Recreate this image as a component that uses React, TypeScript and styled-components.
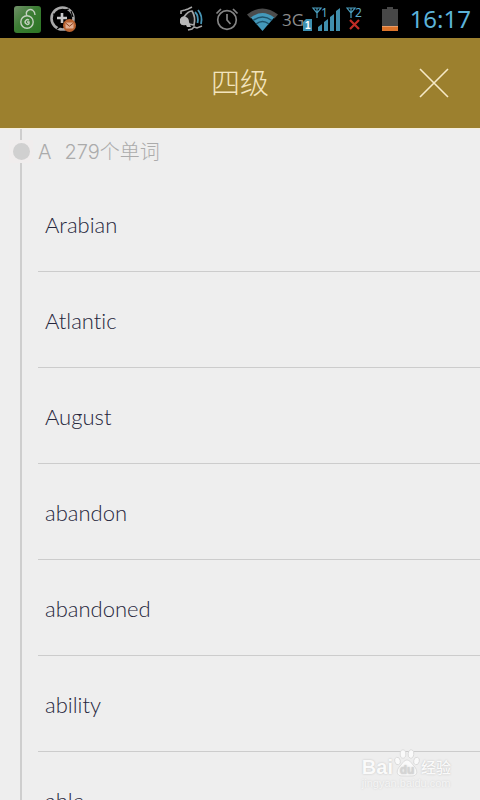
import React from 'react';
import styled, { createGlobalStyle } from 'styled-components';

const GlobalStyle = createGlobalStyle`
  * { box-sizing: border-box; }
  body { margin: 0; background: #eeeeee; }
`;

const Screen = styled.div`
  position: relative;
  display: flex;
  flex-direction: column;
  height: 100vh;
  overflow: hidden;
  background: #eeeeee;
  font-family: 'Open Sans', 'Noto Sans CJK SC', sans-serif;
`;

const StatusBar = styled.div`
  display: flex;
  flex: none;
  align-items: center;
  justify-content: space-between;
  height: 38px;
  padding: 0 9px 0 14px;
  background: #000;
`;

const StatusGroup = styled.div<{ $gap: number }>`
  display: flex;
  align-items: center;
  gap: ${({ $gap }) => $gap}px;

  svg { display: block; flex: none; }
`;

const Clock = styled.time`
  color: #5cb3d9;
  font: 400 24px/38px 'Noto Sans', sans-serif;
`;

const Header = styled.header`
  display: grid;
  flex: none;
  grid-template-columns: 1fr auto 1fr;
  align-items: center;
  height: 91px;
  padding: 0 24px;
  background: #9c802e;
  border-bottom: 1px solid #f6efdc;
`;

const Title = styled.h1`
  grid-column: 2;
  margin: 0;
  padding-bottom: 4px;
  color: #f3e4bd;
  font: 300 29px/40px 'Noto Sans CJK SC', sans-serif;
`;

const CloseButton = styled.button`
  display: grid;
  justify-self: end;
  place-items: center;
  width: 44px;
  height: 44px;
  padding: 0;
  border: 0;
  background: none;
  color: #f6e9c6;
`;

const Content = styled.main`
  display: flex;
  flex: 1;
  min-height: 0;
  overflow-y: auto;
  scrollbar-width: none;
`;

const Timeline = styled.div`
  display: flex;
  flex: none;
  flex-direction: column;
  align-items: center;
  width: 38px;
  height: max-content;
  min-height: 100%;
  padding-left: 4px;
`;

const Rail = styled.div<{ $grow?: boolean }>`
  flex: ${({ $grow }) => ($grow ? '1' : 'none')};
  width: 2px;
  min-height: 11px;
  background: #cecece;
`;

const Marker = styled.div`
  display: grid;
  flex: none;
  place-items: center;
  width: 24px;
  height: 23px;
  background: #f0eded;

  &::before {
    width: 17px;
    height: 17px;
    border-radius: 50%;
    background: #d0d0d0;
    content: '';
  }
`;

const Section = styled.section`
  flex: 1;
  min-width: 0;
`;

const SectionTitle = styled.h2`
  display: flex;
  gap: 13px;
  align-items: center;
  height: 47px;
  margin: 0;
  color: #ababab;
  font: 300 20px/47px Inter, 'Noto Sans CJK SC', sans-serif;
`;

const WordList = styled.ul`
  margin: 0;
  padding: 0;
  list-style: none;
`;

const WordRow = styled.li`
  display: flex;
  align-items: center;
  height: 96px;
  padding: 2px 7px 0;
  border-bottom: 1px solid #cccccc;
  color: #26263c;
  font: 300 22px/32px Lato, sans-serif;
  font-variant-ligatures: none;
`;

const Watermark = styled.div`
  position: absolute;
  right: 29px;
  bottom: 12px;
  display: flex;
  flex-direction: column;
  color: #fafafa;
  text-shadow: 0 0 2px #bdbdbd;
  pointer-events: none;
`;

const Brand = styled.div`
  display: flex;
  align-items: flex-end;
  font: 700 20px/22px 'Liberation Sans', sans-serif;

  svg { display: block; flex: none; }
`;

const BrandSuffix = styled.span`
  font: 500 15px/22px 'Noto Sans CJK SC', sans-serif;
`;

const Site = styled.span`
  color: #f5f5f5;
  font: 400 11px/10px 'Liberation Sans', sans-serif;
  text-shadow: 0 0 2px #cccccc;
`;

const words = ['Arabian', 'Atlantic', 'August', 'abandon', 'abandoned', 'ability', 'able'];

const LockIcon = () => (
  <svg width="27" height="27" viewBox="0 0 27 27" fill="none">
    <defs>
      <linearGradient id="lock" x1="0" y1="0" x2="1" y2="1">
        <stop offset="0" stopColor="#72906a" />
        <stop offset=".45" stopColor="#3b7d33" />
        <stop offset="1" stopColor="#2c7524" />
      </linearGradient>
    </defs>
    <rect width="27" height="27" rx="3" fill="url(#lock)" />
    <g stroke="#c4d0c0" strokeWidth="1.4">
      <circle cx="13" cy="16" r="6.2" />
      <path d="M13 10C10.500 5 16 2 19 4.500Q21 6 21 9" />
      <path d="M15 14.300a2.300 2.300 0 1 0 0 3.400V16h-2" />
    </g>
  </svg>
);

const MessageIcon = () => (
  <svg width="27" height="27" viewBox="0 0 27 27" fill="none">
    <circle cx="12.5" cy="12.5" r="11" stroke="#a8a8a8" strokeWidth="2.6" />
    <path d="M3 8l5 1 3-4 8-2M7 23l4-3 5 1M21 5l2 6" stroke="#000" strokeWidth="1.2" />
    <path d="M12 7v10M7 12h10" stroke="#c8c8c8" strokeWidth="2.6" />
    <circle cx="19.5" cy="19.5" r="6.5" fill="#ba6330" />
    <rect x="15.5" y="16.5" width="8" height="6" rx=".8" fill="#e0ae92" />
    <path d="M15.500 17l4 3.200 4-3.200" stroke="#8e431e" />
  </svg>
);

const VibrateIcon = () => (
  <svg width="28" height="26" viewBox="0 0 28 26" fill="none">
    <path d="M2 8V5l4-1 3-1 4-2" stroke="#a5a5a5" strokeWidth="1.6" />
    <path d="M9 24l4-1 2-2 3 1 5-2" stroke="#a5a5a5" strokeWidth="1.6" />
    <path d="M5 11q4-6 8-6q4 6 2 14l-5-1" fill="#151515" stroke="#a5a5a5" strokeWidth="1.7" />
    <path d="M1 13q2-4 6-2q3 1 3 5l2 5H8l-1-2q-5 1-6-2z" fill="#b8b8b8" />
    <path d="M16 6q4 4 2.500 11M19 4q5 6 3 14" stroke="#4795b5" strokeWidth="1.8" />
  </svg>
);

const AlarmIcon = () => (
  <svg width="24" height="24" viewBox="0 0 24 24" fill="none" stroke="#858585" strokeWidth="1.7">
    <circle cx="12" cy="13" r="9.3" />
    <path d="M12 7v6l3.500 4M1.500 6.500L6 2M18 2l4.500 4.500" />
  </svg>
);

const WifiIcon = () => (
  <svg width="31" height="23" viewBox="0 0 31 23" fill="none">
    <path d="M0 6.500Q15.500-5.500 31 6.500L27.500 10.500Q15.500 1.500 3.500 10.500z" fill="#4b4b4b" />
    <path d="M3.800 9.500Q15.500.5 27.200 9.500L15.500 23z" fill="#4499bb" />
    <path d="M6 12.500Q15.500 5.500 25 12.500M9 16Q15.500 11 22 16" stroke="#1e526a" strokeWidth="1.5" />
  </svg>
);

const NetworkIcon = () => (
  <svg width="60" height="28" viewBox="0 0 60 28" fill="none">
    <text x="0" y="21" fill="#8c8c8c" fontFamily="Open Sans, sans-serif" fontSize="17" fontWeight="500">3G</text>
    <path d="M24 14h6v12h-9v-9z" fill="#3d91b2" />
    <text x="23" y="24" fill="#fff" fontFamily="Liberation Sans, sans-serif" fontSize="10" fontWeight="700">1</text>
    <path d="M31 3h8l-4 5zM35 3v10" stroke="#4b9ebe" strokeWidth="1.2" />
    <text x="39" y="12" fill="#5cabc9" fontFamily="Noto Sans, sans-serif" fontSize="12">1</text>
    <path d="M36 26v-4l4-3v7zM42 26v-9l4-3v12zM48 26V12l4-3v17zM54 26V6l4-3v23z" fill="#408fad" />
  </svg>
);

const SecondSimIcon = () => (
  <svg width="18" height="28" viewBox="0 0 18 28" fill="none">
    <path d="M1 3h8L5 8zM5 3v10" stroke="#4b9ebe" strokeWidth="1.2" />
    <text x="9" y="12" fill="#5cabc9" fontFamily="Noto Sans, sans-serif" fontSize="12">2</text>
    <path d="M4 15l9 9M13 15l-9 9" stroke="#c02c26" strokeWidth="2.2" />
  </svg>
);

const BatteryIcon = () => (
  <svg width="16" height="24" viewBox="0 0 16 24">
    <path d="M0 2h5V0h6v2h5v22H0z" fill="#474747" />
    <path d="M0 19.500h16V24H0z" fill="#dc742b" />
    <path d="M0 19.500h16" stroke="#eb9c66" />
  </svg>
);

const PawIcon = () => (
  <svg width="28" height="29" viewBox="0 0 26 29">
    <g fill="#fafafa" stroke="#d2d2d2" strokeWidth=".7">
      <ellipse cx="3.5" cy="12" rx="2.8" ry="3.8" transform="rotate(-15 3.500 12)" />
      <ellipse cx="9" cy="5" rx="2.8" ry="4.2" />
      <ellipse cx="17" cy="5" rx="2.8" ry="4.2" transform="rotate(10 17 5)" />
      <ellipse cx="22.5" cy="12" rx="2.8" ry="3.8" transform="rotate(15 22.500 12)" />
      <path d="M13 11c3 0 4.500 3.500 7 6 4 4 4 10-2 10H8c-6 0-6-6-2-10 2.500-2.500 4-6 7-6z" />
    </g>
    <text x="13" y="25" fill="#d4d4d4" textAnchor="middle" fontFamily="Liberation Sans, sans-serif" fontSize="12" fontWeight="700">du</text>
  </svg>
);

export default function App() {
  return (
    <Screen>
      <GlobalStyle />
      <StatusBar>
        <StatusGroup $gap={9}>
          <LockIcon />
          <MessageIcon />
        </StatusGroup>
        <StatusGroup $gap={18}>
          <StatusGroup $gap={4}>
            <StatusGroup $gap={8}>
              <VibrateIcon />
              <AlarmIcon />
              <WifiIcon />
            </StatusGroup>
            <NetworkIcon />
            <SecondSimIcon />
          </StatusGroup>
          <StatusGroup $gap={12}>
            <BatteryIcon />
            <Clock>16:17</Clock>
          </StatusGroup>
        </StatusGroup>
      </StatusBar>
      <Header>
        <Title>四级</Title>
        <CloseButton type="button" aria-label="关闭">
          <svg width="30" height="30" viewBox="0 0 30 30" fill="none" stroke="currentColor" strokeWidth="1.6">
            <path d="M1 1l28 28M29 1L1 29" />
          </svg>
        </CloseButton>
      </Header>
      <Content>
        <Timeline>
          <Rail />
          <Marker />
          <Rail $grow />
        </Timeline>
        <Section>
          <SectionTitle>
            <span>A</span>
            <span>279个单词</span>
          </SectionTitle>
          <WordList>
            {words.map((word) => (
              <WordRow key={word}>{word}</WordRow>
            ))}
          </WordList>
        </Section>
      </Content>
      <Watermark>
        <Brand>
          <span>Bai</span>
          <PawIcon />
          <BrandSuffix>经验</BrandSuffix>
        </Brand>
        <Site>jingyan.baidu.com</Site>
      </Watermark>
    </Screen>
  );
}
